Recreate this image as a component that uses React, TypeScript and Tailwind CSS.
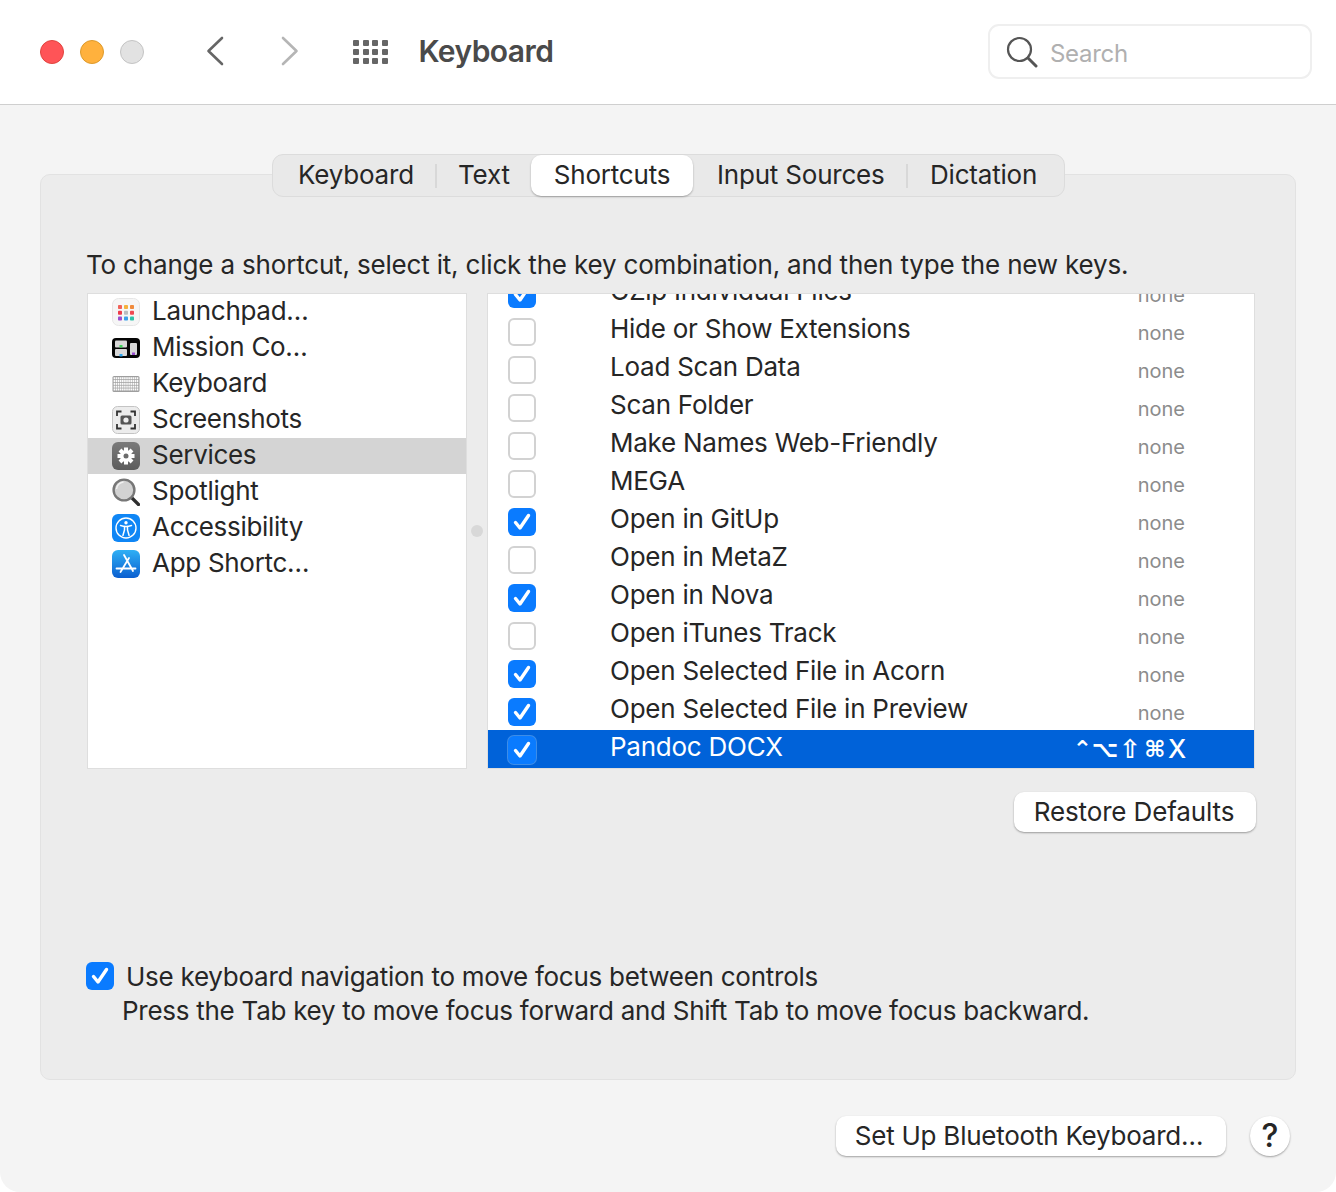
const services = [
  { name: 'GZip Individual Files', checked: true },
  { name: 'Hide or Show Extensions', checked: false },
  { name: 'Load Scan Data', checked: false },
  { name: 'Scan Folder', checked: false },
  { name: 'Make Names Web-Friendly', checked: false },
  { name: 'MEGA', checked: false },
  { name: 'Open in GitUp', checked: true },
  { name: 'Open in MetaZ', checked: false },
  { name: 'Open in Nova', checked: true },
  { name: 'Open iTunes Track', checked: false },
  { name: 'Open Selected File in Acorn', checked: true },
  { name: 'Open Selected File in Preview', checked: true },
]

function Check() {
  return (
    <svg viewBox="0 0 28 28" className="h-[28px] w-[28px]">
      <path d="M7.5 14.5l4.5 5.5L20.5 7.5" fill="none" stroke="#fff" strokeWidth="3.4" strokeLinecap="round" strokeLinejoin="round" />
    </svg>
  )
}

function Checkbox({ checked, outlined }: { checked: boolean; outlined?: boolean }) {
  if (checked) {
    return (
      <div className={`h-[28px] w-[28px] shrink-0 rounded-[6px] bg-[#0a7bff] ${outlined ? 'ring-1 ring-[#3d8de8]' : ''}`}>
        <Check />
      </div>
    )
  }
  return <div className="h-[28px] w-[28px] shrink-0 rounded-[6px] border-2 border-[#d2d2d2] bg-white" />
}

function LaunchpadIcon() {
  const colors = ['#f0625a', '#f5b13d', '#f08a3c', '#ee3b4a', '#b9bcc0', '#ef4a52', '#9a4fd0', '#3aa0e8', '#2cc2a8']
  return (
    <svg viewBox="0 0 28 28" className="h-[28px] w-[28px]">
      <rect x="0.5" y="0.5" width="27" height="27" rx="6" fill="#f6f6f6" stroke="#e6e6e6" />
      {colors.map((c, i) => (
        <rect key={i} x={6 + (i % 3) * 6} y={7 + Math.floor(i / 3) * 5.8} width="4" height="4" rx="0.8" fill={c} />
      ))}
    </svg>
  )
}

function MissionIcon() {
  return (
    <svg viewBox="0 0 28 28" className="h-[28px] w-[28px]">
      <rect x="0" y="4" width="28" height="20" rx="4" fill="#050505" />
      <rect x="3" y="6.5" width="12" height="7" rx="1" fill="#d8d8d8" />
      <rect x="7.5" y="11" width="3" height="2.5" fill="#3ed45a" />
      <rect x="3" y="15" width="12" height="7" rx="1" fill="#d8d8d8" />
      <rect x="7.5" y="20" width="3" height="2.5" fill="#2ea8f0" />
      <rect x="18" y="9" width="7" height="12" rx="1" fill="#d8d8d8" />
      <rect x="20" y="18.5" width="3" height="2.5" fill="#9a4fd0" />
    </svg>
  )
}

function KeyboardIcon() {
  const keys = []
  for (let r = 0; r < 5; r++) {
    for (let c = 0; c < 12; c++) {
      keys.push(<rect key={`${r}-${c}`} x={1.6 + c * 2.1} y={7.2 + r * 2.8} width="1.6" height="2.1" fill="#fbfbfb" />)
    }
  }
  return (
    <svg viewBox="0 0 28 28" className="h-[28px] w-[28px]">
      <rect x="0.5" y="6" width="27" height="16" rx="1.5" fill="#9e9e9e" />
      {keys}
    </svg>
  )
}

function ScreenshotIcon() {
  return (
    <svg viewBox="0 0 28 28" className="h-[28px] w-[28px]">
      <rect x="0.5" y="0.5" width="27" height="27" rx="5" fill="#ececec" stroke="#c4c4c4" />
      <path d="M5 10V5.5h4.5M18.5 5.5H23V10M23 18v4.5h-4.5M9.5 22.5H5V18" fill="none" stroke="#333" strokeWidth="1.8" />
      <rect x="8.5" y="9.5" width="11" height="9" rx="1.5" fill="#555" />
      <circle cx="14" cy="14" r="2.6" fill="#eee" />
    </svg>
  )
}

function GearIcon() {
  const teeth = [0, 45, 90, 135, 180, 225, 270, 315]
  return (
    <svg viewBox="0 0 28 28" className="h-[28px] w-[28px]">
      <defs>
        <linearGradient id="gearTile" x1="0" y1="0" x2="0" y2="1">
          <stop offset="0" stopColor="#7a7a7a" />
          <stop offset="1" stopColor="#5c5c5c" />
        </linearGradient>
      </defs>
      <rect x="0" y="0" width="28" height="28" rx="6" fill="url(#gearTile)" />
      {teeth.map((a) => (
        <rect key={a} x="12" y="5.5" width="4" height="4" fill="#fff" transform={`rotate(${a} 14 14)`} />
      ))}
      <circle cx="14" cy="14" r="6" fill="#fff" />
      <circle cx="14" cy="14" r="2.5" fill="#6b6b6b" />
    </svg>
  )
}

function SpotlightIcon() {
  return (
    <svg viewBox="0 0 28 28" className="h-[28px] w-[28px]">
      <path d="M19.5 19.5l7 7" stroke="#2e2e2e" strokeWidth="3.2" strokeLinecap="round" />
      <circle cx="12" cy="12" r="10.4" fill="#d2d2d2" stroke="#777" strokeWidth="2.4" />
      <path d="M4.5 11a8 8 0 0 1 7-7" fill="none" stroke="#f2f2f2" strokeWidth="1.5" />
    </svg>
  )
}

function AccessibilityIcon() {
  return (
    <svg viewBox="0 0 28 28" className="h-[28px] w-[28px]">
      <rect width="28" height="28" rx="6" fill="#0f86f5" />
      <circle cx="14" cy="14" r="10" fill="none" stroke="#fff" strokeWidth="1.4" />
      <circle cx="14" cy="8.8" r="1.7" fill="#fff" />
      <path d="M8.5 11.5l4 1v3.5l-1.6 5.5M19.5 11.5l-4 1v3.5l1.6 5.5M12.5 12.5h3" fill="none" stroke="#fff" strokeWidth="1.5" strokeLinecap="round" />
    </svg>
  )
}

function AppStoreIcon() {
  return (
    <svg viewBox="0 0 28 28" className="h-[28px] w-[28px]">
      <defs>
        <linearGradient id="storeTile" x1="0" y1="0" x2="0" y2="1">
          <stop offset="0" stopColor="#2fb0f5" />
          <stop offset="1" stopColor="#0b5fd0" />
        </linearGradient>
      </defs>
      <rect width="28" height="28" rx="6" fill="url(#storeTile)" />
      <path d="M12 5l9 16M17 8l-8.5 14M4.5 18.5h19" fill="none" stroke="#fff" strokeWidth="1.8" strokeLinecap="round" />
    </svg>
  )
}

const categories = [
  { name: 'Launchpad…', icon: <LaunchpadIcon /> },
  { name: 'Mission Co…', icon: <MissionIcon /> },
  { name: 'Keyboard', icon: <KeyboardIcon /> },
  { name: 'Screenshots', icon: <ScreenshotIcon /> },
  { name: 'Services', icon: <GearIcon />, active: true },
  { name: 'Spotlight', icon: <SpotlightIcon /> },
  { name: 'Accessibility', icon: <AccessibilityIcon /> },
  { name: 'App Shortc…', icon: <AppStoreIcon /> },
]

function TitleBar() {
  return (
    <header className="flex h-[105px] items-center border-b border-[#cfcfcf] bg-white pl-[40px] pr-[24px]">
      <div className="flex gap-[16px]">
        <div className="h-[24px] w-[24px] rounded-full border border-[#e0443e] bg-[#ff5457]" />
        <div className="h-[24px] w-[24px] rounded-full border border-[#dd9a2b] bg-[#ffb13d]" />
        <div className="h-[24px] w-[24px] rounded-full border border-[#c4c4c4] bg-[#e2e2e2]" />
      </div>
      <svg viewBox="0 0 20 30" className="mb-[2px] ml-[61px] h-[30px] w-[20px]">
        <path d="M17 2L3.5 15 17 28" fill="none" stroke="#666" strokeWidth="2.6" strokeLinecap="round" strokeLinejoin="round" />
      </svg>
      <svg viewBox="0 0 20 30" className="mb-[2px] ml-[55px] h-[30px] w-[20px]">
        <path d="M3 2l13.5 13L3 28" fill="none" stroke="#b5b5b5" strokeWidth="2.6" strokeLinecap="round" strokeLinejoin="round" />
      </svg>
      <div className="mb-[1px] ml-[53px] grid grid-cols-4 gap-x-[3.5px] gap-y-[3px]">
        {Array.from({ length: 12 }).map((_, i) => (
          <div key={i} className="h-[6px] w-[6px] rounded-[1px] bg-[#666666]" />
        ))}
      </div>
      <h1 className="mb-[2px] ml-[31px] text-[30px] font-semibold tracking-[-0.55px] text-[#4a4a4a]">Keyboard</h1>
      <div className="mb-[1px] ml-auto flex h-[55px] w-[324px] items-center gap-[12px] rounded-[11px] border-2 border-[#efefef] pl-[16px]">
        <svg viewBox="0 0 32 32" className="h-[32px] w-[32px]">
          <circle cx="13.5" cy="13.5" r="11.5" fill="none" stroke="#555" strokeWidth="2.2" />
          <path d="M22 22l8 8" stroke="#555" strokeWidth="3" strokeLinecap="round" />
        </svg>
        <span className="translate-y-[2px] text-[24px] tracking-[-0.3px] text-[#b0b0b0]">Search</span>
      </div>
    </header>
  )
}

function Tabs() {
  const cls = 'text-[26px] tracking-[-0.2px] text-[#262626]'
  const sep = <div className="h-[24px] w-[2px] bg-[#d8d8d8]" />
  return (
    <div className="relative z-10 mx-auto -mt-[21px] flex h-[43px] w-[793px] -translate-x-[3px] items-center rounded-[11px] border border-[#dcdcdc] bg-[#e9e9e9] pl-[25px]">
      <span className={`${cls} w-[137px] pb-[2px]`}>Keyboard</span>
      {sep}
      <span className={`${cls} ml-[21px] w-[73px] pb-[2px]`}>Text</span>
      <span className={`${cls} flex h-[41px] w-[162px] items-center justify-center rounded-[10px] bg-white pb-[2px] shadow-[0_1px_2px_rgba(0,0,0,0.3)]`}>Shortcuts</span>
      <span className={`${cls} ml-[24px] w-[189px] pb-[2px]`}>Input Sources</span>
      {sep}
      <span className={`${cls} ml-[22px] pb-[2px]`}>Dictation</span>
    </div>
  )
}

function CategoryList() {
  return (
    <div className="h-[476px] w-[380px] shrink-0 overflow-hidden border border-[#dedede] bg-white">
      {categories.map((c) => (
        <div key={c.name} className={`flex h-[36px] items-center pl-[24px] ${c.active ? 'bg-[#d4d4d4]' : ''}`}>
          {c.icon}
          <span className="ml-[12px] -translate-y-[2px] text-[26px] tracking-[-0.3px] text-[#262626]">{c.name}</span>
        </div>
      ))}
    </div>
  )
}

function ShortcutKeys() {
  return (
    <span className="ml-auto flex items-center font-['DejaVu_Sans',sans-serif] text-[23px] leading-[38px] font-bold text-white">
      <span className="flex w-[21px] justify-center">⌃</span>
      <span className="flex w-[24px] justify-center">⌥</span>
      <span className="flex w-[26px] justify-center text-[26px]">⇧</span>
      <span className="flex w-[24px] justify-center">⌘</span>
      <span className="flex w-[20px] justify-center font-['Inter',sans-serif] text-[26px] font-medium">X</span>
    </span>
  )
}

function ServiceList() {
  return (
    <div className="h-[476px] w-[768px] shrink-0 overflow-hidden border border-[#dedede] bg-white">
      <div className="-mt-[20px]">
        {services.map((s) => (
          <div key={s.name} className="flex h-[38px] items-center pl-[20px] pr-[69px]">
            <div className="translate-y-[1px]">
              <Checkbox checked={s.checked} />
            </div>
            <span className="ml-[74px] -translate-y-[3px] text-[26px] tracking-[-0.25px] text-[#262626]">{s.name}</span>
            <span className="ml-auto translate-y-[2px] text-[20px] text-[#8c8c8c]">none</span>
          </div>
        ))}
        <div className="flex h-[38px] items-center bg-[#0062d9] pl-[20px] pr-[67px]">
          <div className="translate-y-[1px]">
            <Checkbox checked outlined />
          </div>
          <span className="ml-[74px] -translate-y-[3px] text-[26px] tracking-[-0.25px] text-white">Pandoc DOCX</span>
          <ShortcutKeys />
        </div>
      </div>
    </div>
  )
}

export default function App() {
  return (
    <div className="h-[1192px] w-[1336px] bg-white font-['Inter',sans-serif]">
      <div className="h-[1192px] overflow-hidden rounded-b-[20px] bg-[#f4f4f4]">
        <TitleBar />
        <main className="px-[40px] pt-[69px]">
          <section className="h-[906px] rounded-[10px] border border-[#e2e2e2] bg-[#ececec] pl-[46px] pr-[39px]">
            <Tabs />
            <p className="-ml-[1px] mt-[52px] text-[26px] leading-[32px] tracking-[-0.18px] text-[#262626]">
              To change a shortcut, select it, click the key combination, and then type the new keys.
            </p>
            <div className="mt-[12px] flex">
              <CategoryList />
              <div className="flex w-[20px] shrink-0 items-center justify-center">
                <div className="h-[12px] w-[12px] rounded-full bg-[#d8d8d8]" />
              </div>
              <ServiceList />
            </div>
            <div className="mt-[23px] flex justify-end">
              <button className="h-[40px] w-[242px] rounded-[10px] bg-white pb-[4px] pr-[2px] text-[26px] tracking-[-0.13px] text-[#262626] shadow-[0_1px_2px_rgba(0,0,0,0.35)]">
                Restore Defaults
              </button>
            </div>
            <div className="-ml-[1px] mt-[128px] flex items-center gap-[12px]">
              <Checkbox checked />
              <span className="translate-y-[1px] text-[26px] leading-[32px] tracking-[-0.26px] text-[#262626]">Use keyboard navigation to move focus between controls</span>
            </div>
            <p className="mt-[3px] pl-[35px] text-[26px] leading-[32px] tracking-[-0.27px] text-[#262626]">
              Press the Tab key to move focus forward and Shift Tab to move focus backward.
            </p>
          </section>
          <div className="mt-[36px] flex justify-end gap-[24px] pr-[6px]">
            <button className="h-[40px] w-[390px] rounded-[10px] bg-white pb-[4px] pr-[4px] text-[26px] tracking-[-0.24px] text-[#262626] shadow-[0_1px_2px_rgba(0,0,0,0.35)]">
              Set Up Bluetooth Keyboard…
            </button>
            <button className="h-[40px] w-[40px] rounded-full bg-white text-[32px] leading-[40px] font-medium text-[#262626] shadow-[0_1px_2px_rgba(0,0,0,0.35)]">
              ?
            </button>
          </div>
        </main>
      </div>
    </div>
  )
}
